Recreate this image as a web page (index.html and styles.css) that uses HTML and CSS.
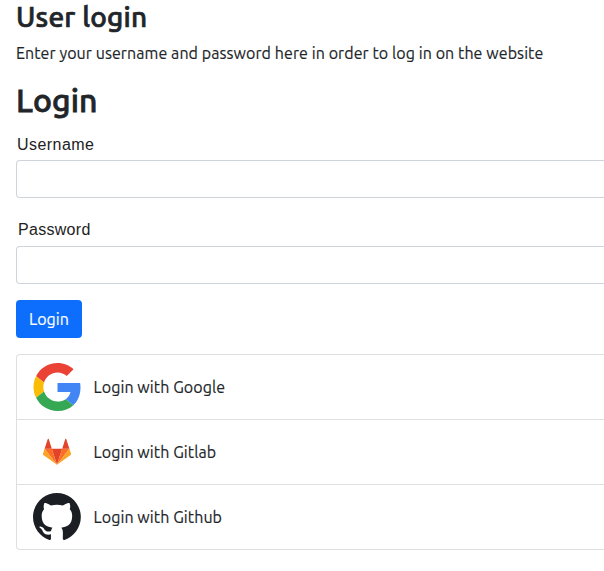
FILE: index.html
```
<!DOCTYPE html>
<html lang="en">
<head>
<meta charset="utf-8">
<title>User login</title>
<link rel="stylesheet" href="styles.css">
</head>
<body>
<main class="page">
  <h2 class="title">User login</h2>
  <p class="intro">Enter your username and password here in order to log in on the website</p>
  <h1 class="heading">Login</h1>
  <form class="form">
    <label class="label" for="username">Username</label>
    <input class="input" id="username" type="text">
    <label class="label label-password" for="password">Password</label>
    <input class="input" id="password" type="password">
    <button class="button" type="button">Login</button>
  </form>
  <div class="providers">
    <a class="provider">
      <svg class="icon" viewBox="-0.5 0 48 48">
        <path fill="#EA4335" d="M24 9.5c3.54 0 6.71 1.22 9.21 3.6l6.85-6.85C35.9 2.38 30.47 0 24 0 14.62 0 6.51 5.38 2.56 13.22l7.98 6.19C12.43 13.72 17.74 9.5 24 9.5z"/>
        <path fill="#4285F4" d="M46.98 24.55c0-1.57-.15-3.09-.38-4.55H24v9.02h12.94c-.58 2.96-2.26 5.48-4.78 7.18l7.73 6c4.51-4.18 7.09-10.36 7.09-17.65z"/>
        <path fill="#FBBC05" d="M10.53 28.59c-.48-1.45-.76-2.99-.76-4.59s.27-3.14.76-4.59l-7.98-6.19C.92 16.46 0 20.12 0 24c0 3.88.92 7.54 2.56 10.78l7.97-6.19z"/>
        <path fill="#34A853" d="M24 48c6.48 0 11.93-2.13 15.89-5.81l-7.73-6c-2.15 1.45-4.92 2.3-8.16 2.3-6.26 0-11.57-4.22-13.47-9.91l-7.98 6.19C6.51 42.62 14.62 48 24 48z"/>
      </svg>
      <span>Login with Google</span>
    </a>
    <a class="provider">
      <svg class="icon" viewBox="0 0 48 48">
        <path fill="#E24329" d="M24 36.7 29.2 20.8H18.8z"/>
        <path fill="#FC6D26" d="M24 36.7 18.8 20.8H11.6zM24 36.7 29.2 20.8H36.4z"/>
        <path fill="#FCA326" d="M11.6 20.8 10 25.7c-.2.5 0 .9.4 1.2L24 36.7zM36.4 20.8 38 25.7c.2.5 0 .9-.4 1.2L24 36.7z"/>
        <path fill="#E24329" d="M11.6 20.8H18.8L15.8 11.2c-.1-.5-.9-.5-1.1 0zM36.4 20.8H29.2L32.2 11.2c.1-.5.9-.5 1.1 0z"/>
      </svg>
      <span>Login with Gitlab</span>
    </a>
    <a class="provider">
      <svg class="icon" viewBox="0 0 98 98">
        <path fill="#1B1F23" fill-rule="evenodd" d="M48.854 0C21.839 0 0 22 0 49.217c0 21.756 13.993 40.172 33.405 46.69 2.427.49 3.316-1.059 3.316-2.362 0-1.141-.08-5.052-.08-9.127-13.59 2.934-16.42-5.867-16.42-5.867-2.184-5.704-5.42-7.17-5.42-7.17-4.448-3.015.324-3.015.324-3.015 4.934.326 7.523 5.052 7.523 5.052 4.367 7.496 11.404 5.378 14.235 4.074.404-3.178 1.699-5.378 3.074-6.6-10.839-1.141-22.243-5.378-22.243-24.283 0-5.378 1.94-9.778 5.014-13.2-.485-1.222-2.184-6.275.486-13.038 0 0 4.125-1.304 13.426 5.052a46.97 46.97 0 0 1 12.214-1.63c4.125 0 8.33.571 12.213 1.63 9.302-6.356 13.427-5.052 13.427-5.052 2.67 6.763.97 11.816.485 13.038 3.155 3.422 5.015 7.822 5.015 13.2 0 18.905-11.404 23.06-22.324 24.283 1.78 1.548 3.316 4.481 3.316 9.126 0 6.6-.08 11.897-.08 13.526 0 1.304.89 2.853 3.316 2.364 19.412-6.52 33.405-24.935 33.405-46.691C97.707 22 75.788 0 48.854 0z"/>
      </svg>
      <span>Login with Github</span>
    </a>
  </div>
</main>
</body>
</html>
```
FILE: styles.css
```
* { box-sizing: border-box; }
body {
  margin: 0;
  background: #fff;
  color: #212529;
  font: 16px/24px "Ubuntu", "Noto Sans", sans-serif;
  letter-spacing: 0.08px;
  -webkit-text-stroke: 0.15px;
}
.page { padding-left: 16px; }
.title {
  margin: 0;
  padding-top: 1px;
  height: 41px;
  font-size: 28px;
  line-height: 32px;
  font-weight: 500;
  letter-spacing: 0.2px;
  -webkit-text-stroke: 0.7px #212529;
}
.intro { margin: 0 0 16px; white-space: nowrap; }
.heading {
  margin: 0 0 12px;
  font-size: 32px;
  line-height: 39px;
  font-weight: 500;
  letter-spacing: 0.1px;
  -webkit-text-stroke: 0.8px #212529;
}
.form { display: flex; flex-direction: column; align-items: flex-start; }
.label {
  height: 28px;
  padding-left: 1px;
  color: #222;
  font: 16px/25px "Liberation Sans", sans-serif;
  letter-spacing: 0.45px;
  -webkit-text-stroke: 0;
}
.label-password {
  margin-top: 20px;
  padding-left: 2px;
  line-height: 24px;
  letter-spacing: 0.3px;
}
.input {
  width: 100%;
  height: 38px;
  padding: 6px 12px;
  border: 1px solid #ced4da;
  border-right: 0;
  border-radius: 4px 0 0 4px;
  background: #fff;
}
.button {
  width: 66px;
  height: 38px;
  margin-top: 16px;
  padding: 0;
  border: 0;
  border-radius: 4px;
  background: #0d6efd;
  color: #fff;
  font: inherit;
  letter-spacing: inherit;
}
.providers {
  margin-top: 16px;
  border: 1px solid #dfdfdf;
  border-right: 0;
  border-radius: 4px 0 0 4px;
}
.provider {
  display: flex;
  align-items: center;
  gap: 12.5px;
  height: 65px;
  padding: 0 16px;
  border-bottom: 1px solid #dfdfdf;
}
.provider:last-child { height: 64px; border-bottom: 0; }
.icon { width: 48px; height: 48px; }
```
